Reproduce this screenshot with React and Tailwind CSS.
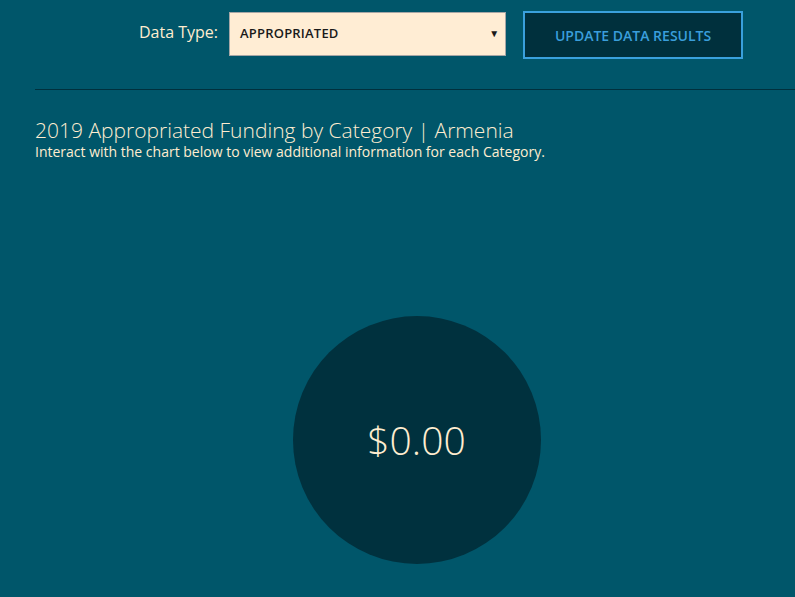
export default function App() {
  return (
    <div
      className="w-[795px] h-[597px] overflow-hidden bg-[#00566a] text-[#ffedd0]"
      style={{ fontFamily: '"Open Sans", "Liberation Sans", sans-serif' }}
    >
      <div className="flex items-start pl-[139px] pt-[11px] h-[89px]">
        <label className="text-[16px] leading-[20px] mt-[11px] text-[#ffedd0]">Data Type:</label>
        <div className="relative ml-[11px] mt-px w-[277px] h-[44px] bg-[#ffedd4] border border-[#a6a6a6] flex items-center">
          <span className="pl-[10px] text-[13px] font-semibold tracking-[0.2px] text-[#1a1a1a]">APPROPRIATED</span>
          <span className="absolute right-[6px] top-[13px] text-[10px] text-[#1a1a1a]">▼</span>
        </div>
        <button className="ml-[17px] w-[220px] h-[48px] bg-[#00303d] border-2 border-[#3aa0dc] text-[#3a9edb] text-[14px] font-semibold">
          UPDATE DATA RESULTS
        </button>
      </div>
      <div className="ml-[35px] border-t border-[#00303d]"></div>
      <div className="pl-[35px] pt-[28px]">
        <h1 className="text-[21px] leading-[24px] font-light text-[#ffedd0]">
          2019 Appropriated Funding by Category | Armenia
        </h1>
        <p className="text-[14px] leading-[18px] mt-px text-[#ffedd0]">
          Interact with the chart below to view additional information for each Category.
        </p>
      </div>
      <div className="flex justify-center pt-[155px] pl-[38px]">
        <div className="w-[248px] h-[248px] rounded-full bg-[#00313e] flex items-center justify-center">
          <span className="text-[39px] font-light text-[#ffedd0]">$0.00</span>
        </div>
      </div>
    </div>
  );
}
